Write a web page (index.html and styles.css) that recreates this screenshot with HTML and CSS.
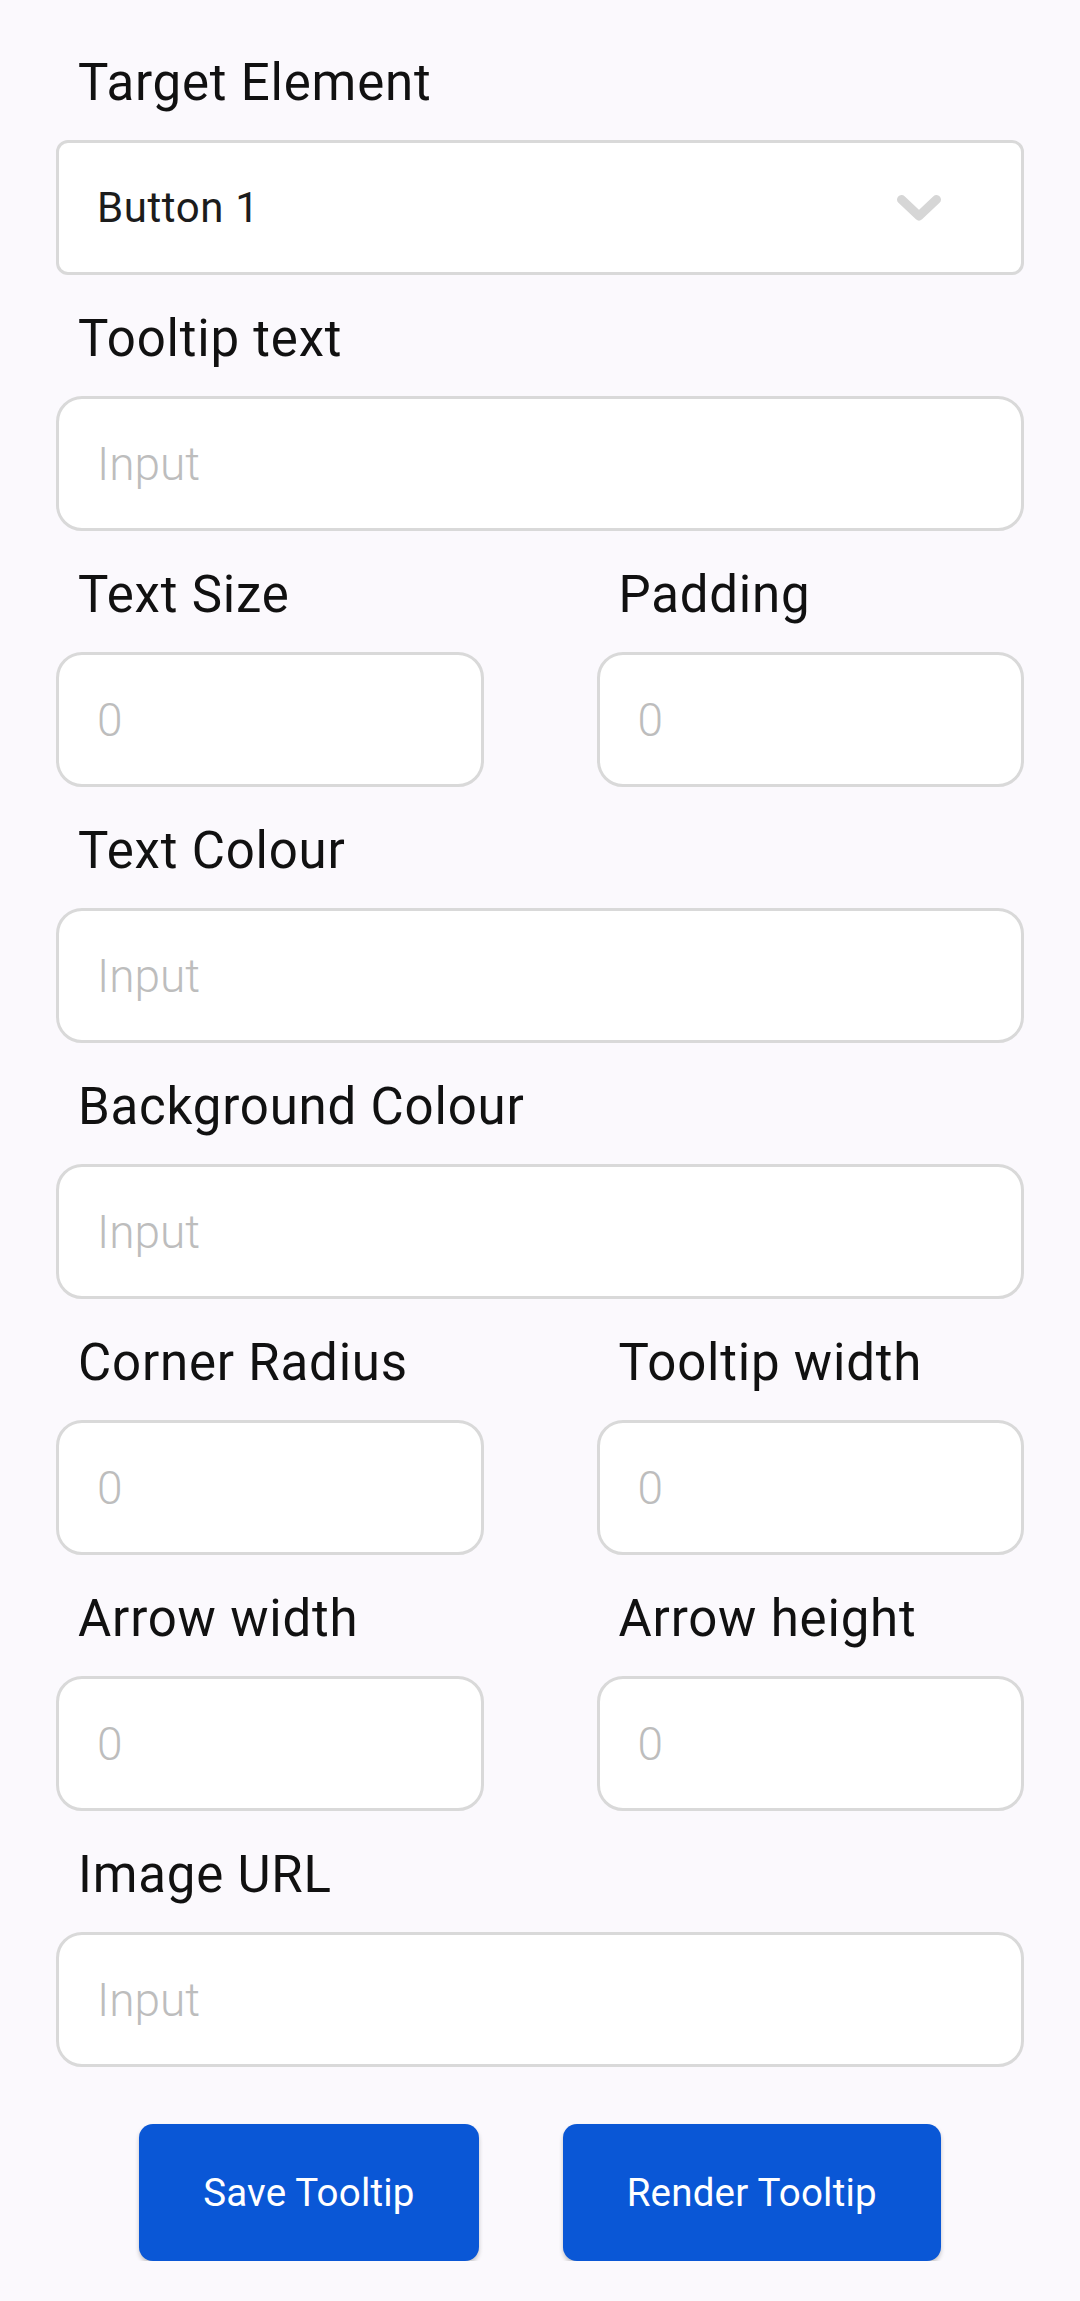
FILE: index.html
```html
<!DOCTYPE html>
<html lang="en">
<head>
<meta charset="utf-8">
<title>Tooltip Settings</title>
<link rel="stylesheet" href="styles.css">
</head>
<body>
<main class="form">
  <div class="field">
    <label class="label">Target Element</label>
    <div class="select">
      <span class="select-value">Button 1</span>
      <svg class="chevron" width="44" height="26" viewBox="0 0 44 26"><polyline points="4.5,4.5 22,21 39.5,4.5" fill="none" stroke="#d6d6d6" stroke-width="9" stroke-linecap="round" stroke-linejoin="round"/></svg>
    </div>
  </div>
  <div class="field">
    <label class="label">Tooltip text</label>
    <input class="input" type="text" placeholder="Input">
  </div>
  <div class="row">
    <div class="field">
      <label class="label">Text Size</label>
      <input class="input" type="text" placeholder="0">
    </div>
    <div class="field">
      <label class="label">Padding</label>
      <input class="input" type="text" placeholder="0">
    </div>
  </div>
  <div class="field">
    <label class="label">Text Colour</label>
    <input class="input" type="text" placeholder="Input">
  </div>
  <div class="field">
    <label class="label">Background Colour</label>
    <input class="input" type="text" placeholder="Input">
  </div>
  <div class="row">
    <div class="field">
      <label class="label">Corner Radius</label>
      <input class="input" type="text" placeholder="0">
    </div>
    <div class="field">
      <label class="label">Tooltip width</label>
      <input class="input" type="text" placeholder="0">
    </div>
  </div>
  <div class="row">
    <div class="field">
      <label class="label">Arrow width</label>
      <input class="input" type="text" placeholder="0">
    </div>
    <div class="field">
      <label class="label">Arrow height</label>
      <input class="input" type="text" placeholder="0">
    </div>
  </div>
  <div class="field">
    <label class="label">Image URL</label>
    <input class="input" type="text" placeholder="Input">
  </div>
  <div class="actions">
    <button class="btn btn-save">Save Tooltip</button>
    <button class="btn btn-render">Render Tooltip</button>
  </div>
</main>
</body>
</html>
```

FILE: styles.css
```css
html, body {
  margin: 0;
  padding: 0;
  background: #fbf9fd;
}
body {
  font-family: Roboto, "Liberation Sans", sans-serif;
  color: #111111;
}
.form {
  display: flex;
  flex-direction: column;
  gap: 34px;
  padding: 53px 56px 0 56px;
}
.field {
  display: flex;
  flex-direction: column;
  min-width: 0;
}
.row {
  display: grid;
  grid-template-columns: 1fr 1fr;
  column-gap: 113px;
}
.label {
  font-size: 51px;
  line-height: 60px;
  letter-spacing: 0.8px;
  padding-left: 22px;
  margin-bottom: 27px;
  color: #111111;
  white-space: nowrap;
}
.select {
  box-sizing: border-box;
  height: 135px;
  border: 3px solid #d9d9d9;
  border-radius: 12px;
  background: #ffffff;
  display: flex;
  align-items: center;
  justify-content: space-between;
  padding: 0 80px 0 38px;
}
.select-value {
  font-size: 42px;
  letter-spacing: 0.6px;
  color: #1c1c1c;
}
.chevron {
  display: block;
}
.input {
  box-sizing: border-box;
  width: 100%;
  height: 135px;
  border: 3px solid #d9d9d9;
  border-radius: 26px;
  background: #ffffff;
  padding: 0 0 0 38px;
  margin: 0;
  font-family: Roboto, "Liberation Sans", sans-serif;
  font-size: 46px;
  font-weight: 300;
  color: #1c1c1c;
  outline: none;
}
.input::placeholder {
  color: #bdbdbd;
  opacity: 1;
}
.actions {
  display: flex;
  justify-content: center;
  gap: 84px;
  margin-top: 23px;
}
.btn {
  height: 137px;
  border: none;
  border-radius: 14px;
  background: #0a57d6;
  color: #ffffff;
  font-family: Roboto, "Liberation Sans", sans-serif;
  font-size: 38.5px;
  letter-spacing: 0.2px;
  padding: 0 64px;
  box-shadow: 0 3px 4px rgba(0, 0, 0, 0.22);
}
```
